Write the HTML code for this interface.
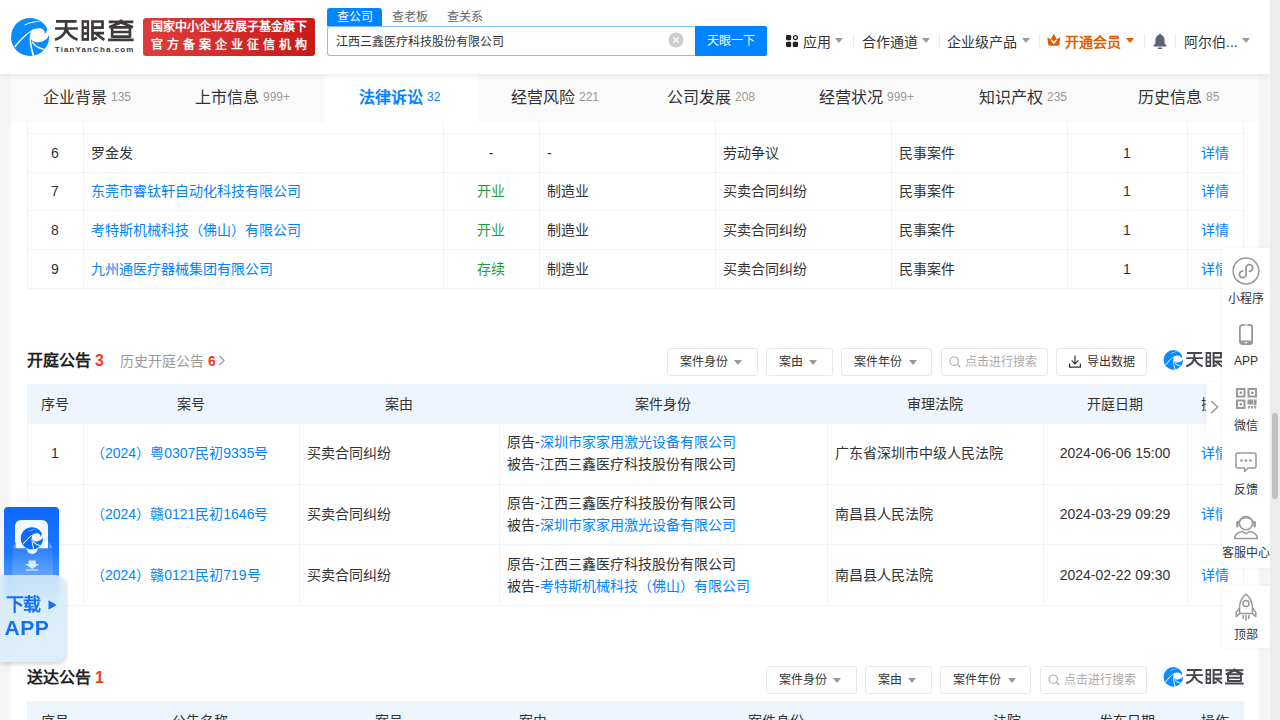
<!DOCTYPE html>
<html lang="zh-CN">
<head>
<meta charset="utf-8">
<title>天眼查</title>
<style>
*{box-sizing:border-box;margin:0;padding:0}
html,body{width:1280px;height:720px;overflow:hidden}
body{font-family:"Liberation Sans",sans-serif;font-size:14px;color:#333;background:#f5f5f5;position:relative}
a{color:#0084ff;text-decoration:none}
.abs{position:absolute}
/* page */
#card{position:absolute;left:11px;top:74px;width:1248px;height:646px;background:#fff}
/* header */
#hdr{position:absolute;left:0;top:0;width:1270px;height:74px;background:#fff;box-shadow:0 2px 6px rgba(0,0,0,.08);z-index:20}
#badge{position:absolute;left:143px;top:18px;width:172px;height:38px;border-radius:3px;background:linear-gradient(90deg,#de3c3c,#c91a1a);color:#fff;font-weight:bold;font-size:12px;line-height:17px;padding:1px 0 0 8px;white-space:nowrap}
#badge .l2{letter-spacing:4px;position:relative;top:.6px}
.stab{position:absolute;top:8px;width:55px;height:18px;line-height:18px;font-size:12px;text-align:center;color:#666}
.stab.on{background:#0084ff;color:#fff;border-radius:3px 3px 0 0}
#sinput{position:absolute;left:327px;top:26px;width:369px;height:30px;border:1px solid #7fc1ff;border-right:none;border-radius:2px 0 0 2px;font-size:12px;line-height:30.5px;padding-left:8px;color:#333;border-radius:3px 0 0 3px}
#sbtn{position:absolute;left:695px;top:26px;width:72px;height:30px;background:#0084ff;color:#fff;font-size:12px;line-height:30px;text-align:center;border-radius:0 2px 2px 0}
.nv{position:absolute;top:31.5px;height:20px;line-height:20px;font-size:14px;color:#333;white-space:nowrap}
.caret{position:absolute;width:0;height:0;border-left:4px solid transparent;border-right:4px solid transparent;border-top:5px solid #999}
.sep{position:absolute;top:34px;width:1px;height:13px;background:#e9e9e9}
/* tabs */
#tabs{position:absolute;left:11px;top:74px;width:1248px;height:47.5px;background:#fafafa;z-index:10}
.tab{position:absolute;top:0;width:156px;height:47.5px;line-height:48px;font-size:16px;color:#333;white-space:nowrap}
.tab span{font-size:12px;color:#999;margin-left:4px;position:relative;top:-2px}
.tab.on{background:#fff;color:#0084ff;font-weight:bold}
.tab.on span{color:#0084ff;font-weight:normal}
/* tables */
.vl{position:absolute;width:1px;background:#eff4fa}
.hl{position:absolute;height:1px;background:#eff4fa}
.t{position:absolute;white-space:nowrap;font-size:14px;line-height:20px;height:20px}
.c{transform:translateX(-50%)}
.green{color:#1e9e3c}
.th{position:absolute;background:#eef5fd}
.h2{position:absolute;font-size:16px;font-weight:bold;color:#222;line-height:22px;white-space:nowrap}
.h2 b{color:#f5381f;margin-left:4px}
.fb{position:absolute;height:28px;border:1px solid #e8e8e8;border-radius:3px;background:#fff;font-size:12px;line-height:26px;color:#333;white-space:nowrap}
.wm{font-size:20px;line-height:26px;font-weight:bold;color:#333;white-space:nowrap;letter-spacing:-.5px}
/* scrollbar */
#sb{position:absolute;left:1270px;top:0;width:10px;height:720px;background:#ececec;z-index:50}
#sbt{position:absolute;left:2px;top:413px;width:6px;height:86px;border-radius:3px;background:#c1c1c1}
/* right toolbar */
.rt{position:absolute;left:1222px;width:48px;background:#fff;z-index:30;box-shadow:0 0 4px rgba(0,0,0,.06)}
.rl{position:absolute;width:60px;left:-6px;text-align:center;font-size:12px;line-height:14px;color:#333;white-space:nowrap}
</style>
</head>
<body>
<svg width="0" height="0" style="position:absolute"><defs>
<g id="lgw" fill="#fff"><path d="M372 252C430 222 520 210 560 250C575 275 577 298 574 312C596 296 612 268 612 232L670 232L670 330L640 332C612 410 520 452 430 438C400 430 372 412 354 386C340 340 350 290 372 252Z"/>
<path d="M384 246C300 288 180 398 98 508L116 526C190 420 300 320 378 268Z"/>
<path d="M342 330C330 420 350 545 386 655L412 644C376 540 356 430 362 380Z"/>
<path d="M386 425C420 488 500 528 572 543L560 562C488 550 408 512 370 440Z"/>
<path d="M255 168C330 120 430 103 512 117C430 122 340 142 264 177Z"/></g>
<g id="lg"><circle cx="345" cy="360" r="298" fill="#0a8bff"/><use href="#lgw"/></g>
<g id="lg2"><circle cx="345" cy="360" r="298" fill="#0a6cff"/><use href="#lgw"/></g>
<g id="wm" fill="none" stroke-width="40" stroke-linejoin="miter">
<path d="M60 81H365M45 186H385M210 62V186M206 186Q196 300 45 352M214 186Q236 300 380 352"/>
<path d="M457 62V368M535 62V368" stroke-width="34"/><path d="M457 82H535M457 172H535M457 260H535M457 348H535"/>
<path d="M603 62V368M603 82H752V172H603M603 256H775M655 262L778 358M603 352L668 322"/>
<path d="M845 86H1210M1027 52V86M1027 96L850 168M1027 96L1205 168M895 168V322M1160 168V322M878 168H1178M895 238H1160M895 306H1160M835 356H1215"/>
</g>
</defs></svg>
<div id="card"></div>

<!-- HEADER -->
<div id="hdr">
  <svg class="abs" style="left:8px;top:14px" width="46" height="46" viewBox="0 0 720 720"><use href="#lg"/></svg>
  <svg class="abs" style="left:52px;top:16px" width="86" height="40" viewBox="0 0 1280 595"><use href="#wm" stroke="#3e3a39"/><text transform="translate(42,531) scale(1.12,1)" font-family="Liberation Sans, sans-serif" font-weight="bold" font-size="106" fill="#3e3a39" textLength="1044" lengthAdjust="spacing">TianYanCha.com</text></svg>
  <div id="badge"><div>国家中小企业发展子基金旗下</div><div class="l2">官方备案企业征信机构</div></div>
  <div class="stab on" style="left:327px">查公司</div>
  <div class="stab" style="left:382px">查老板</div>
  <div class="stab" style="left:437px">查关系</div>
  <div id="sinput">江西三鑫医疗科技股份有限公司</div>
  <svg class="abs" style="left:668px;top:32px" width="16" height="16" viewBox="0 0 16 16"><circle cx="8" cy="8" r="7.5" fill="#ccc"/><path d="M5.3 5.3L10.7 10.7M10.7 5.3L5.3 10.7" stroke="#fff" stroke-width="1.3"/></svg>
  <div id="sbtn">天眼一下</div>

  <svg class="abs" style="left:786px;top:35px" width="12" height="12" viewBox="0 0 12 12"><rect x="0" y="0" width="5.2" height="5.2" rx="1.2" fill="#222"/><rect x="0" y="6.8" width="5.2" height="5.2" rx="1.2" fill="#222"/><rect x="6.8" y="6.8" width="5.2" height="5.2" rx="1.2" fill="#222"/><circle cx="9.4" cy="2.6" r="2" fill="none" stroke="#222" stroke-width="1.2"/></svg>
  <div class="nv" style="left:803px">应用</div><div class="caret" style="left:835px;top:38px"></div>
  <div class="sep" style="left:853px"></div>
  <div class="nv" style="left:862px">合作通道</div><div class="caret" style="left:922px;top:38px"></div>
  <div class="sep" style="left:939px"></div>
  <div class="nv" style="left:947px">企业级产品</div><div class="caret" style="left:1022px;top:38px"></div>
  <div class="sep" style="left:1039px"></div>
  <svg class="abs" style="left:1047.3px;top:34.2px" width="13.6" height="11.8" viewBox="0 0 13.4 11.7"><path d="M0.3 3.2L3.6 5.3L6.7 0L9.8 5.3L13.1 3.2L12.3 10.1Q12 11.7 10.5 11.7H2.9Q1.4 11.7 1.1 10.1Z" fill="#dc5f08"/><path d="M4.1 5.6L6.7 9.1L9.5 5.6" fill="none" stroke="#fff" stroke-width="1.4"/></svg>
  <div class="nv" style="left:1065px;color:#dc5f08;font-weight:bold">开通会员</div><div class="caret" style="left:1126px;top:38px;border-top-color:#dc5f08"></div>
  <div class="sep" style="left:1144px"></div>
  <svg class="abs" style="left:1152px;top:33px" width="16" height="17" viewBox="0 0 16 17"><path d="M8 0.8 C8.8 0.8 9.2 1.4 9.2 2.1 C11.6 2.8 12.6 4.8 12.6 7.2 V10.2 L14.4 12.6 V13.4 H1.6 V12.6 L3.4 10.2 V7.2 C3.4 4.8 4.4 2.8 6.8 2.1 C6.8 1.4 7.2 0.8 8 0.8Z" fill="#5b6470"/><rect x="5.6" y="14.6" width="4.8" height="1.5" rx=".75" fill="#5b6470"/></svg>
  <div class="sep" style="left:1175px"></div>
  <div class="nv" style="left:1184px">阿尔伯...</div><div class="caret" style="left:1242px;top:38px"></div>
</div>

<!-- TABS -->
<div id="tabs">
  <div class="tab" style="left:0;padding-left:32px">企业背景<span>135</span></div>
  <div class="tab" style="left:156px;padding-left:28px">上市信息<span>999+</span></div>
  <div class="tab on" style="left:313px;width:154px;padding-left:35px">法律诉讼<span>32</span></div>
  <div class="tab" style="left:468px;padding-left:32px">经营风险<span>221</span></div>
  <div class="tab" style="left:624px;padding-left:32px">公司发展<span>208</span></div>
  <div class="tab" style="left:780px;padding-left:28px">经营状况<span>999+</span></div>
  <div class="tab" style="left:936px;padding-left:32px">知识产权<span>235</span></div>
  <div class="tab" style="left:1092px;padding-left:35px">历史信息<span>85</span></div>
</div>

<!-- TABLE 1 -->
<div id="t1">
<div class="vl" style="left:27px;top:121px;height:168px"></div>
<div class="vl" style="left:83px;top:121px;height:168px"></div>
<div class="vl" style="left:443px;top:121px;height:168px"></div>
<div class="vl" style="left:539px;top:121px;height:168px"></div>
<div class="vl" style="left:715px;top:121px;height:168px"></div>
<div class="vl" style="left:891px;top:121px;height:168px"></div>
<div class="vl" style="left:1067px;top:121px;height:168px"></div>
<div class="vl" style="left:1187px;top:121px;height:168px"></div>
<div class="vl" style="left:1243px;top:121px;height:168px"></div>
<div class="hl" style="left:27px;top:133px;width:1217px"></div>
<div class="hl" style="left:27px;top:172px;width:1217px"></div>
<div class="hl" style="left:27px;top:210px;width:1217px"></div>
<div class="hl" style="left:27px;top:249px;width:1217px"></div>
<div class="hl" style="left:27px;top:288px;width:1217px"></div>
<div class="t c" style="left:55px;top:143px">6</div>
<div class="t" style="left:91px;top:143px">罗金发</div>
<div class="t c " style="left:491px;top:143px">-</div>
<div class="t" style="left:547px;top:143px">-</div>
<div class="t" style="left:723px;top:143px">劳动争议</div>
<div class="t" style="left:899px;top:143px">民事案件</div>
<div class="t c" style="left:1127px;top:143px">1</div>
<a class="t" style="left:1201px;top:143px">详情</a>
<div class="t c" style="left:55px;top:181px">7</div>
<a class="t" style="left:91px;top:181px">东莞市睿钛轩自动化科技有限公司</a>
<div class="t c green" style="left:491px;top:181px">开业</div>
<div class="t" style="left:547px;top:181px">制造业</div>
<div class="t" style="left:723px;top:181px">买卖合同纠纷</div>
<div class="t" style="left:899px;top:181px">民事案件</div>
<div class="t c" style="left:1127px;top:181px">1</div>
<a class="t" style="left:1201px;top:181px">详情</a>
<div class="t c" style="left:55px;top:220px">8</div>
<a class="t" style="left:91px;top:220px">考特斯机械科技（佛山）有限公司</a>
<div class="t c green" style="left:491px;top:220px">开业</div>
<div class="t" style="left:547px;top:220px">制造业</div>
<div class="t" style="left:723px;top:220px">买卖合同纠纷</div>
<div class="t" style="left:899px;top:220px">民事案件</div>
<div class="t c" style="left:1127px;top:220px">1</div>
<a class="t" style="left:1201px;top:220px">详情</a>
<div class="t c" style="left:55px;top:259px">9</div>
<a class="t" style="left:91px;top:259px">九州通医疗器械集团有限公司</a>
<div class="t c green" style="left:491px;top:259px">存续</div>
<div class="t" style="left:547px;top:259px">制造业</div>
<div class="t" style="left:723px;top:259px">买卖合同纠纷</div>
<div class="t" style="left:899px;top:259px">民事案件</div>
<div class="t c" style="left:1127px;top:259px">1</div>
<a class="t" style="left:1201px;top:259px">详情</a>
</div>
<!-- SECTION 2 -->
<div id="s2">
<div class="h2" style="left:27px;top:350px">开庭公告<b>3</b></div>
<div class="t" style="left:120px;top:350.5px;color:#999">历史开庭公告 <b style="color:#f5381f">6</b></div>
<svg class="abs" style="left:218px;top:355px" width="8" height="11" viewBox="0 0 8 11"><path d="M1.5 1 L6 5.5 L1.5 10" fill="none" stroke="#999" stroke-width="1.2"/></svg>
<div class="fb" style="left:667px;top:348.2px;width:91px"><span class="abs" style="left:11.5px;top:0">案件身份</span><i class="caret" style="left:66px;top:11px"></i></div>
<div class="fb" style="left:766px;top:348.2px;width:67px"><span class="abs" style="left:11.5px;top:0">案由</span><i class="caret" style="left:42px;top:11px"></i></div>
<div class="fb" style="left:841px;top:348.2px;width:91px"><span class="abs" style="left:11.5px;top:0">案件年份</span><i class="caret" style="left:66.5px;top:11px"></i></div>
<div class="fb" style="left:940.5px;top:348.2px;width:107px;color:#aaa"><svg class="abs" style="left:7px;top:7px" width="12" height="12" viewBox="0 0 12 12"><circle cx="5.2" cy="5.2" r="4.2" fill="none" stroke="#aaa" stroke-width="1.1"/><path d="M8.2 8.2L11 11" stroke="#aaa" stroke-width="1.1"/></svg><span class="abs" style="left:23.5px;top:0">点击进行搜索</span></div>
<div class="fb" style="left:1056px;top:348.2px;width:91px"><svg class="abs" style="left:12px;top:6px" width="12" height="13" viewBox="0 0 12 13"><path d="M6 0.5V8.5M2.6 5.4L6 8.8L9.4 5.4M0.6 8.5V12.2H11.4V8.5" fill="none" stroke="#333" stroke-width="1.2"/></svg><span class="abs" style="left:29.5px;top:0">导出数据</span></div>
<svg class="abs" style="left:1161.85px;top:347.86px" width="23.68" height="23.68" viewBox="0 0 720 720"><use href="#lg"/></svg><svg class="abs" style="left:1183.69px;top:349.15px" width="62.85" height="19.64" viewBox="0 0 1280 400"><use href="#wm" stroke="#45474d"/></svg>
<div class="th" style="left:27px;top:384px;width:1217px;height:40px"></div>
<div class="vl" style="left:27px;top:384px;height:222px"></div>
<div class="vl" style="left:83px;top:384px;height:222px"></div>
<div class="vl" style="left:299px;top:384px;height:222px"></div>
<div class="vl" style="left:499px;top:384px;height:222px"></div>
<div class="vl" style="left:827px;top:384px;height:222px"></div>
<div class="vl" style="left:1043px;top:384px;height:222px"></div>
<div class="vl" style="left:1187px;top:384px;height:222px"></div>
<div class="vl" style="left:1243px;top:384px;height:222px"></div>
<div class="hl" style="left:27px;top:484px;width:1217px"></div>
<div class="hl" style="left:27px;top:544px;width:1217px"></div>
<div class="hl" style="left:27px;top:605px;width:1217px"></div>
<div class="t c" style="left:55px;top:394px">序号</div>
<div class="t c" style="left:191px;top:394px">案号</div>
<div class="t c" style="left:399px;top:394px">案由</div>
<div class="t c" style="left:663px;top:394px">案件身份</div>
<div class="t c" style="left:935px;top:394px">审理法院</div>
<div class="t c" style="left:1115px;top:394px">开庭日期</div>
<div class="t c" style="left:1215px;top:394px">操作</div>
<div class="t c" style="left:55px;top:443px">1</div>
<a class="t" style="left:91px;top:443px">（2024）粤0307民初9335号</a>
<div class="t" style="left:307px;top:443px">买卖合同纠纷</div>
<div class="t" style="left:507px;top:432px">原告-<a>深圳市家家用激光设备有限公司</a></div>
<div class="t" style="left:507px;top:454px">被告-江西三鑫医疗科技股份有限公司</div>
<div class="t" style="left:835px;top:443px">广东省深圳市中级人民法院</div>
<div class="t c" style="left:1115px;top:443px">2024-06-06 15:00</div>
<a class="t" style="left:1201px;top:443px">详情</a>
<div class="t c" style="left:55px;top:503.70000000000005px">2</div>
<a class="t" style="left:91px;top:503.70000000000005px">（2024）赣0121民初1646号</a>
<div class="t" style="left:307px;top:503.70000000000005px">买卖合同纠纷</div>
<div class="t" style="left:507px;top:492.70000000000005px">原告-江西三鑫医疗科技股份有限公司</div>
<div class="t" style="left:507px;top:514.7px">被告-<a>深圳市家家用激光设备有限公司</a></div>
<div class="t" style="left:835px;top:503.70000000000005px">南昌县人民法院</div>
<div class="t c" style="left:1115px;top:503.70000000000005px">2024-03-29 09:29</div>
<a class="t" style="left:1201px;top:503.70000000000005px">详情</a>
<div class="t c" style="left:55px;top:565px">3</div>
<a class="t" style="left:91px;top:565px">（2024）赣0121民初719号</a>
<div class="t" style="left:307px;top:565px">买卖合同纠纷</div>
<div class="t" style="left:507px;top:554px">原告-江西三鑫医疗科技股份有限公司</div>
<div class="t" style="left:507px;top:576px">被告-<a>考特斯机械科技（佛山）有限公司</a></div>
<div class="t" style="left:835px;top:565px">南昌县人民法院</div>
<div class="t c" style="left:1115px;top:565px">2024-02-22 09:30</div>
<a class="t" style="left:1201px;top:565px">详情</a>
<div class="h2" style="left:27px;top:667px">送达公告<b>1</b></div>
<div class="fb" style="left:766px;top:665.7px;width:91px"><span class="abs" style="left:11.5px;top:0">案件身份</span><i class="caret" style="left:66px;top:11px"></i></div>
<div class="fb" style="left:865px;top:665.7px;width:67px"><span class="abs" style="left:11.5px;top:0">案由</span><i class="caret" style="left:42px;top:11px"></i></div>
<div class="fb" style="left:940px;top:665.7px;width:91px"><span class="abs" style="left:11.5px;top:0">案件年份</span><i class="caret" style="left:66.5px;top:11px"></i></div>
<div class="fb" style="left:1039.5px;top:665.7px;width:107px;color:#aaa"><svg class="abs" style="left:7px;top:7px" width="12" height="12" viewBox="0 0 12 12"><circle cx="5.2" cy="5.2" r="4.2" fill="none" stroke="#aaa" stroke-width="1.1"/><path d="M8.2 8.2L11 11" stroke="#aaa" stroke-width="1.1"/></svg><span class="abs" style="left:23.5px;top:0">点击进行搜索</span></div>
<svg class="abs" style="left:1161.85px;top:665.16px" width="23.68" height="23.68" viewBox="0 0 720 720"><use href="#lg"/></svg><svg class="abs" style="left:1183.69px;top:666.45px" width="62.85" height="19.64" viewBox="0 0 1280 400"><use href="#wm" stroke="#45474d"/></svg>
<div class="th" style="left:27px;top:701px;width:1217px;height:40px"></div>
<div class="vl" style="left:27px;top:701px;height:40px"></div>
<div class="vl" style="left:83px;top:701px;height:40px"></div>
<div class="vl" style="left:317px;top:701px;height:40px"></div>
<div class="vl" style="left:461px;top:701px;height:40px"></div>
<div class="vl" style="left:605px;top:701px;height:40px"></div>
<div class="vl" style="left:947px;top:701px;height:40px"></div>
<div class="vl" style="left:1067px;top:701px;height:40px"></div>
<div class="vl" style="left:1187px;top:701px;height:40px"></div>
<div class="vl" style="left:1243px;top:701px;height:40px"></div>
<div class="t c" style="left:55px;top:711px">序号</div>
<div class="t c" style="left:200px;top:711px">公告名称</div>
<div class="t c" style="left:389px;top:711px">案号</div>
<div class="t c" style="left:533px;top:711px">案由</div>
<div class="t c" style="left:776px;top:711px">案件身份</div>
<div class="t c" style="left:1007px;top:711px">法院</div>
<div class="t c" style="left:1127px;top:711px">发布日期</div>
<div class="t c" style="left:1215px;top:711px">操作</div>
</div>
<!-- SECTION 3 -->
<div id="s3"></div>
<!-- FLOATS -->
<div id="fl">
<!-- right toolbar -->
<div class="rt" style="top:248px;height:320px;border-radius:4px 0 0 4px">
  <svg class="abs" style="left:10px;top:8.5px" width="28" height="28" viewBox="0 0 28 28"><circle cx="14" cy="14" r="12.9" fill="none" stroke="#999" stroke-width="1.5"/><path d="M17.4 14.3A3.3 3.3 0 1 0 14.05 11V17.4A3.3 3.3 0 1 1 10.7 14.1" fill="none" stroke="#999" stroke-width="1.8" stroke-linecap="round"/></svg>
  <div class="rl" style="top:44px">小程序</div>
  <svg class="abs" style="left:17.2px;top:76.4px" width="14" height="21" viewBox="0 0 14 21"><rect x=".9" y=".9" width="12.2" height="19.2" rx="2.4" fill="none" stroke="#999" stroke-width="1.8"/><path d="M.9 16.6H13.1V18.6Q13.1 20.1 11.6 20.1H2.4Q.9 20.1 .9 18.6Z" fill="#999"/><rect x="5.6" y="17.9" width="2.8" height="1.3" rx=".65" fill="#fff"/><rect x="5.4" y=".5" width="3.2" height=".9" fill="#fff"/></svg>
  <div class="rl" style="top:106px">APP</div>
  <svg class="abs" style="left:14px;top:140px" width="21" height="21" viewBox="0 0 21 21" fill="none" stroke="#999" stroke-width="2"><rect x="1" y="1" width="7.5" height="7.5"/><rect x="12.5" y="1" width="7.5" height="7.5"/><rect x="1" y="12.5" width="7.5" height="7.5"/><g fill="#999" stroke="none"><rect x="3.6" y="3.6" width="2.4" height="2.4"/><rect x="15.1" y="3.6" width="2.4" height="2.4"/><rect x="3.6" y="15.1" width="2.4" height="2.4"/><rect x="11.5" y="11.5" width="5.6" height="5"/><rect x="17.6" y="11.5" width="3" height="5"/><rect x="11.8" y="18" width="2" height="2.5"/><rect x="15" y="18" width="2" height="2.5"/><rect x="18.2" y="18" width="2" height="2.5"/><rect x="18.2" y="15.8" width="2" height="1.5"/></g></svg>
  <div class="rl" style="top:171px">微信</div>
  <svg class="abs" style="left:13px;top:204px" width="22" height="21" viewBox="0 0 22 21"><path d="M3 1H19Q21 1 21 3V14Q21 16 19 16H13L9.5 19.5V16H3Q1 16 1 14V3Q1 1 3 1Z" fill="none" stroke="#999" stroke-width="1.5" stroke-linejoin="round"/><circle cx="6.5" cy="8.5" r="1.35" fill="#999"/><circle cx="11" cy="8.5" r="1.35" fill="#999"/><circle cx="15.5" cy="8.5" r="1.35" fill="#999"/></svg>
  <div class="rl" style="top:235px">反馈</div>
  <svg class="abs" style="left:11px;top:265px" width="26" height="27" viewBox="0 0 26 27" fill="none" stroke="#999" stroke-width="1.5"><circle cx="13" cy="10.2" r="6.6"/><path d="M4.6 11.5A8.6 8.6 0 0 1 21.4 11.5"/><path d="M4.3 9.2V13.2M21.7 9.2V13.2" stroke-width="2.4" stroke-linecap="round"/><path d="M1.6 25.6C1.8 20.6 5.8 19 9.2 18.4L13 20.6L16.8 18.4C20.2 19 24.2 20.6 24.4 25.6Z" stroke-linejoin="round"/></svg>
  <div class="rl" style="top:298px">客服中心</div>
</div>
<div class="rt" style="top:586px;height:62px;border-radius:4px 0 0 4px">
  <svg class="abs" style="left:13px;top:7px" width="22" height="28" viewBox="0 0 22 28" fill="none" stroke="#999" stroke-width="1.5" stroke-linejoin="round"><path d="M11 1C15.6 5.2 17.4 9.6 17.4 14V20.4H4.6V14C4.6 9.6 6.4 5.2 11 1Z"/><circle cx="11" cy="10.6" r="3"/><path d="M4.6 15L1.2 19.4V23.6L4.6 20.6M17.4 15L20.8 19.4V23.6L17.4 20.6"/><path d="M8.2 22.6V25.4M11 22.6V27M13.8 22.6V25.4" stroke-linecap="round"/></svg>
  <div class="rl" style="top:42px">顶部</div>
</div>
<!-- expand arrow -->
<div class="abs" style="left:1206px;top:382px;width:16px;height:52px;background:#fff;border-radius:4px 0 0 4px;z-index:29;box-shadow:-1px 0 3px rgba(0,0,0,.05)"><svg class="abs" style="left:3.5px;top:17.5px" width="9" height="14" viewBox="0 0 9 14"><path d="M1.2 1L7.6 7L1.2 13" fill="none" stroke="#999" stroke-width="1.6"/></svg></div>
<!-- download app -->
<div class="abs" style="left:3.5px;top:507px;width:55.5px;height:92px;border-radius:4px;background:linear-gradient(180deg,#0b68ff 0%,#1c7aff 50%,#6fb0ff 100%);z-index:30;overflow:hidden">
  <div class="abs" style="left:11.8px;top:13px;width:33px;height:34px;border-radius:6px;background:#f4f9ff"></div>
  <svg class="abs" style="left:15.3px;top:17.5px" width="26.8" height="26.8" viewBox="0 0 720 720"><use href="#lg2"/></svg>
  <svg class="abs" style="left:0;top:0" width="56" height="92" viewBox="0 0 56 92"><defs><linearGradient id="pk" x1="0" y1="0" x2="0" y2="1"><stop offset="0" stop-color="#2a80ff"/><stop offset="1" stop-color="#9ccaff"/></linearGradient></defs><path d="M8.4 41.2L11.8 34.5V41.2ZM48.6 41.2L44.8 34.5V41.2Z" fill="#5a9dff"/><path d="M8.4 41.2H22.5A5.7 5.7 0 0 0 33.9 41.2H48.6V92H8.4Z" fill="url(#pk)"/><path d="M24.6 53.4H31.8V57H35.2L28.2 62L21.2 57H24.6Z" fill="#d8eaff"/><rect x="21.7" y="62.3" width="12.6" height="1.2" fill="#d8eaff"/></svg>
</div>
<div class="abs" style="left:0;top:575px;width:65px;height:87px;border-radius:0 9px 9px 0;background:rgba(214,235,248,.86);backdrop-filter:blur(3px);z-index:31;box-shadow:1px 2px 5px rgba(0,0,0,.18)">
  <div class="abs" style="left:5.5px;top:19.5px;font-size:18px;line-height:20px;font-weight:bold;color:#1270fb;white-space:nowrap;letter-spacing:-.3px">下载</div>
  <svg class="abs" style="left:48px;top:24.5px" width="9" height="10" viewBox="0 0 9 10"><path d="M0.5 0.3L8.7 5L0.5 9.7Z" fill="#1270fb"/></svg>
  <div class="abs" style="left:4.5px;top:40.5px;font-size:21px;line-height:24px;font-weight:bold;color:#1270fb;white-space:nowrap;letter-spacing:.5px">APP</div>
</div>
</div>

<div id="sb"><div id="sbt"></div></div>
</body>
</html>
